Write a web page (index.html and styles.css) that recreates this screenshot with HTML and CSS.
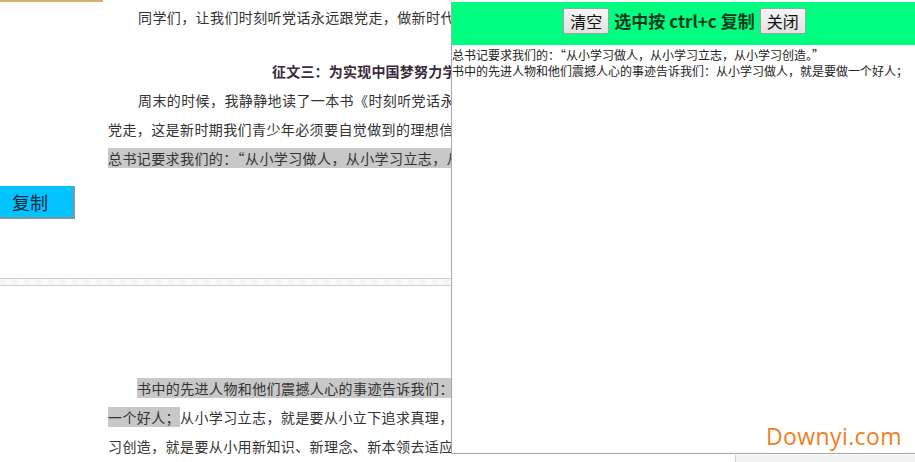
FILE: index.html
```html
<!DOCTYPE html>
<html lang="zh-CN">
<head>
<meta charset="utf-8">
<title>复制</title>
<link rel="stylesheet" href="styles.css">
</head>
<body>
<div class="doc">
  <div class="topbar"></div>
  <div class="page">
    <p class="line indent">同学们，让我们时刻听党话永远跟党走，做新时代的好少年。</p>
    <p class="line title">征文三：为实现中国梦努力学习</p>
    <p class="line indent">周末的时候，我静静地读了一本书《时刻听党话永远跟党走》</p>
    <p class="line">党走，这是新时期我们青少年必须要自觉做到的理想信念。</p>
    <p class="line"><span class="hl">总书记要求我们的：“从小学习做人，从小学习立志，从小学习创造。”</span></p>
  </div>
  <button class="copy">复制</button>
  <div class="sep"></div>
  <div class="page page2">
    <p class="line indent"><span class="hl">书中的先进人物和他们震撼人心的事迹告诉我们：从小学习做人，就是要做</span></p>
    <p class="line"><span class="hl">一个好人；</span>从小学习立志，就是要从小立下追求真理，</p>
    <p class="line">习创造，就是要从小用新知识、新理念、新本领去适应</p>
  </div>
</div>

<div class="panel">
  <div class="panel-head">
    <button class="pbtn">清空</button>
    <span class="hint">选中按 ctrl+c 复制</span>
    <button class="pbtn">关闭</button>
  </div>
  <div class="panel-body">
    <div>总书记要求我们的：“从小学习做人，从小学习立志，从小学习创造。”</div>
    <div>书中的先进人物和他们震撼人心的事迹告诉我们：从小学习做人，就是要做一个好人；</div>
  </div>
</div>
<div class="strip"></div>
<div class="watermark">Downyi.com</div>
</body>
</html>
```
FILE: styles.css
```css
html, body {
  margin: 0;
  padding: 0;
  background: #fff;
  width: 915px;
  height: 462px;
  overflow: hidden;
}
body {
  font-family: "Noto Sans CJK SC", "DejaVu Sans", sans-serif;
  position: relative;
}
.doc {
  width: 451px;
}
.topbar {
  width: 103px;
  height: 2px;
  background: #d2b06e;
}
.page {
  padding-left: 108px;
  white-space: nowrap;
}
.line {
  margin: 0;
  font-size: 14px;
  line-height: 29px;
  height: 29px;
  color: #333;
  letter-spacing: 0.4px;
}
.line:first-child { margin-top: 1px; }
.indent { padding-left: 30px; }
.title {
  margin-top: 25px;
  font-weight: bold;
  color: #3a2a3a;
  padding-left: 164px;
  letter-spacing: 0.2px;
}
.hl {
  background: #c8c8c8;
}
.copy {
  display: block;
  margin: 13px 0 0 0;
  width: 75px;
  height: 33px;
  padding: 0 0 0 12px;
  text-align: left;
  background: #00c3ff;
  border: 0;
  border-right: 2px solid #7a9aa8;
  border-bottom: 2px solid #7a9aa8;
  font-family: "Noto Sans CJK SC", sans-serif;
  font-size: 18px;
  color: #0b2a3a;
}
.sep {
  margin-top: 59px;
  width: 451px;
  height: 6px;
  border-top: 1px solid #cfcfcf;
  border-bottom: 1px solid #cfcfcf;
  background: repeating-linear-gradient(90deg, #f4f4f4 0 6px, #fafafa 6px 12px);
}
.page2 {
  margin-top: 88px;
}
.page2 .indent { padding-left: 29px; }

.panel {
  position: absolute;
  left: 451px;
  top: 2px;
  width: 464px;
  height: 452px;
  background: #fff;
  border-left: 1px solid #a8a8a8;
  border-bottom: 1px solid #a8a8a8;
  box-sizing: border-box;
}
.panel-head {
  height: 43px;
  background: #00fe80;
  display: flex;
  align-items: center;
  justify-content: center;
  gap: 5px;
  padding-bottom: 6px;
  box-sizing: border-box;
  padding-left: 2px;
}
.pbtn {
  font-family: "Noto Sans CJK SC", sans-serif;
  font-size: 16px;
  line-height: 20px;
  padding: 2px 6px 2px;
  background: linear-gradient(#f6f6f6, #e2e2e2);
  border: 1px solid #a0a0a0;
  border-radius: 2px;
  color: #111;
}
.hint {
  font-size: 17px;
  font-weight: bold;
  color: #0c3a1e;
  letter-spacing: 0;
}
.panel-body {
  font-size: 12px;
  line-height: 16px;
  color: #222;
  padding-top: 2px;
  white-space: nowrap;
  letter-spacing: 0;
}
.strip {
  position: absolute;
  left: 735px;
  top: 455px;
  width: 180px;
  height: 7px;
  background: #f2f2f2;
  border-left: 1px solid #cfcfcf;
}
.watermark {
  position: absolute;
  left: 766px;
  top: 420px;
  font-family: "Open Sans", "DejaVu Sans", sans-serif;
  font-size: 23px;
  color: #f0801e;
  letter-spacing: 0.4px;
}
```
